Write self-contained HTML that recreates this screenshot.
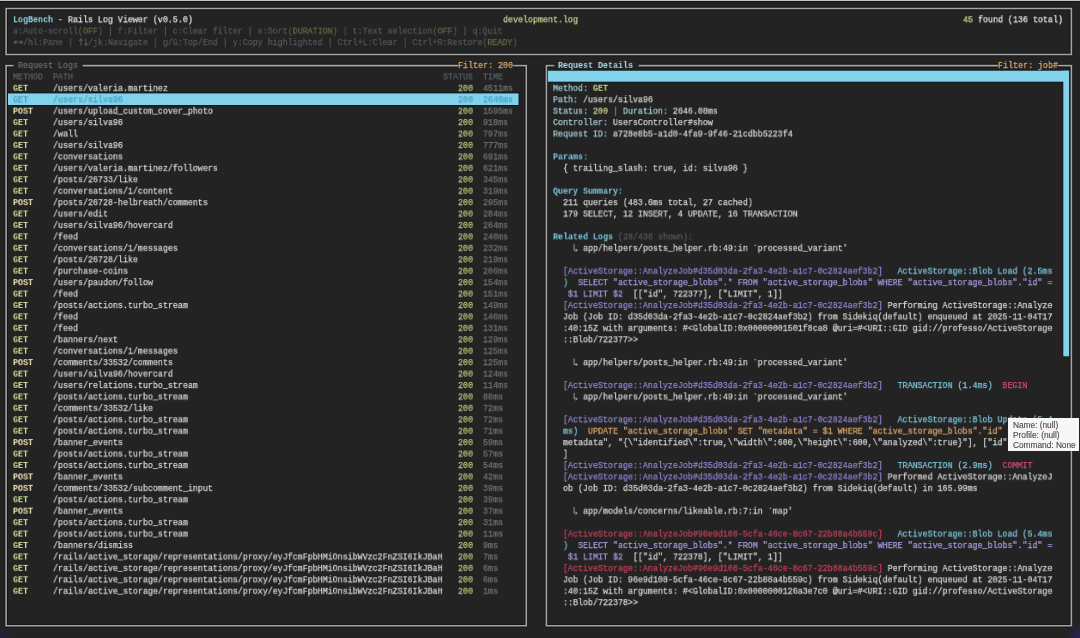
<!DOCTYPE html><html><head><meta charset="utf-8"><style>
html,body{margin:0;padding:0;}
body{width:1080px;height:638px;overflow:hidden;position:relative;background:#232323;font-family:"Liberation Mono",monospace;}
.l{position:absolute;white-space:pre;will-change:transform;-webkit-text-stroke:0.25px;font-size:9.7px;line-height:11.43px;height:11.43px;transform-origin:0 0;}
.b{font-weight:bold;-webkit-text-stroke:0}
.bx{position:absolute;box-sizing:border-box;border:1.5px solid #bdbdbd;}
.hz{position:absolute;height:1.5px;background:#bdbdbd}
.tip{position:absolute;left:1008px;top:418px;width:71px;height:33px;background:#f7f7f7;box-sizing:border-box;font-family:"Liberation Sans",sans-serif;font-size:8.3px;line-height:9.8px;color:#4e4e4e;padding:3px 0 0 5px;-webkit-text-stroke:0.15px;will-change:transform;white-space:pre}
</style></head><body>
<svg style="position:absolute;left:0;top:0" width="1080" height="638"><rect x="0" y="0" width="1080" height="1" fill="#c4c4c4"/><rect x="0" y="1" width="1080" height="1" fill="#131313"/><line x1="5.4" y1="8.5" x2="1072.1" y2="8.5" stroke="#161616" stroke-width="3.6"/><line x1="5.4" y1="54.45" x2="1072.1" y2="54.45" stroke="#161616" stroke-width="3.6"/><line x1="6.1" y1="8.5" x2="6.1" y2="54.45" stroke="#161616" stroke-width="3.6"/><line x1="1071.4" y1="8.5" x2="1071.4" y2="54.45" stroke="#161616" stroke-width="3.6"/><line x1="5.4" y1="65.6" x2="13.6" y2="65.6" stroke="#161616" stroke-width="3.6"/><line x1="82.6" y1="65.6" x2="458.2" y2="65.6" stroke="#161616" stroke-width="3.6"/><line x1="513.2" y1="65.6" x2="527" y2="65.6" stroke="#161616" stroke-width="3.6"/><line x1="5.4" y1="625.7" x2="527" y2="625.7" stroke="#161616" stroke-width="3.6"/><line x1="6.1" y1="65.6" x2="6.1" y2="625.7" stroke="#161616" stroke-width="3.6"/><line x1="526.3" y1="65.6" x2="526.3" y2="625.7" stroke="#161616" stroke-width="3.6"/><line x1="545.7" y1="65.6" x2="554.2" y2="65.6" stroke="#161616" stroke-width="3.6"/><line x1="638.6" y1="65.6" x2="998.2" y2="65.6" stroke="#161616" stroke-width="3.6"/><line x1="1058.2" y1="65.6" x2="1072.1" y2="65.6" stroke="#161616" stroke-width="3.6"/><line x1="545.7" y1="625.7" x2="1072.1" y2="625.7" stroke="#161616" stroke-width="3.6"/><line x1="546.4" y1="65.6" x2="546.4" y2="625.7" stroke="#161616" stroke-width="3.6"/><line x1="1071.4" y1="65.6" x2="1071.4" y2="625.7" stroke="#161616" stroke-width="3.6"/><rect x="7" y="92.4" width="512.5" height="13.6" fill="#14181a"/><rect x="546.9" y="69.7" width="523.1" height="13" fill="#14181a"/><rect x="1062.3" y="69.7" width="7.8" height="287.6" fill="#14181a"/><line x1="5.4" y1="8.5" x2="1072.1" y2="8.5" stroke="#a4a4a4" stroke-width="1.6"/><line x1="5.4" y1="54.45" x2="1072.1" y2="54.45" stroke="#a4a4a4" stroke-width="1.6"/><line x1="6.1" y1="8.5" x2="6.1" y2="54.45" stroke="#a4a4a4" stroke-width="1.6"/><line x1="1071.4" y1="8.5" x2="1071.4" y2="54.45" stroke="#a4a4a4" stroke-width="1.6"/><line x1="5.4" y1="65.6" x2="13.6" y2="65.6" stroke="#a4a4a4" stroke-width="1.6"/><line x1="82.6" y1="65.6" x2="458.2" y2="65.6" stroke="#a4a4a4" stroke-width="1.6"/><line x1="513.2" y1="65.6" x2="527" y2="65.6" stroke="#a4a4a4" stroke-width="1.6"/><line x1="5.4" y1="625.7" x2="527" y2="625.7" stroke="#a4a4a4" stroke-width="1.6"/><line x1="6.1" y1="65.6" x2="6.1" y2="625.7" stroke="#a4a4a4" stroke-width="1.6"/><line x1="526.3" y1="65.6" x2="526.3" y2="625.7" stroke="#a4a4a4" stroke-width="1.6"/><line x1="545.7" y1="65.6" x2="554.2" y2="65.6" stroke="#a4a4a4" stroke-width="1.6"/><line x1="638.6" y1="65.6" x2="998.2" y2="65.6" stroke="#a4a4a4" stroke-width="1.6"/><line x1="1058.2" y1="65.6" x2="1072.1" y2="65.6" stroke="#a4a4a4" stroke-width="1.6"/><line x1="545.7" y1="625.7" x2="1072.1" y2="625.7" stroke="#a4a4a4" stroke-width="1.6"/><line x1="546.4" y1="65.6" x2="546.4" y2="625.7" stroke="#a4a4a4" stroke-width="1.6"/><line x1="1071.4" y1="65.6" x2="1071.4" y2="625.7" stroke="#a4a4a4" stroke-width="1.6"/><rect x="8" y="93.4" width="510.5" height="11.6" fill="#80d3ea"/><rect x="547.9" y="70.7" width="521.1" height="11" fill="#80d3ea"/><rect x="1063.3" y="70.7" width="5.8" height="285.6" fill="#80d3ea"/><g stroke="#575757" stroke-width="1.1" fill="none" stroke-linecap="round"><path d="M14.2 42.15 H22.6 M16 40.55 L14.2 42.15 L16 43.75 M20.8 40.55 L22.6 42.15 L20.8 43.75"/><path d="M80.9 38.75 V45.55 M79.3 40.55 L80.9 38.75 L82.5 40.55"/><path d="M85.9 38.75 V45.55 M84.3 43.75 L85.9 45.55 L87.5 43.75"/></g><path d="M574.1 244.29 V250.29 H577.2 M575.8 248.79 L577.3 250.29 L575.8 251.79" stroke="#9a9a9a" stroke-width="1" fill="none" stroke-linejoin="round"/><path d="M574.1 358.59 V364.59 H577.2 M575.8 363.09 L577.3 364.59 L575.8 366.09" stroke="#9a9a9a" stroke-width="1" fill="none" stroke-linejoin="round"/><path d="M574.1 392.88 V398.88 H577.2 M575.8 397.38 L577.3 398.88 L575.8 400.38" stroke="#9a9a9a" stroke-width="1" fill="none" stroke-linejoin="round"/><path d="M574.1 507.18 V513.18 H577.2 M575.8 511.68 L577.3 513.18 L575.8 514.68" stroke="#9a9a9a" stroke-width="1" fill="none" stroke-linejoin="round"/></svg>
<div class="l" style="left:13.4px;top:14px;transform:translateY(0.19px) scaleX(0.8590)"><span style="color:#92d4e6" class="b">LogBench</span><span style="color:#e4e4e4"> - Rails Log Viewer (v0.5.0)</span></div>
<div class="l" style="left:503.4px;top:14px;transform:translateY(0.19px) scaleX(0.8590)"><span style="color:#c4d890">development.log</span></div>
<div class="l" style="left:963.4px;top:14px;transform:translateY(0.19px) scaleX(0.8590)"><span style="color:#c4d890">45</span><span style="color:#e4e4e4"> found (136 total)</span></div>
<div class="l" style="left:13.4px;top:25px;transform:translateY(0.62px) scaleX(0.8590)"><span style="color:#575757">a:Auto-scroll(</span><span style="color:#646e44">OFF</span><span style="color:#575757">) | f:Filter | c:Clear filter | s:Sort(</span><span style="color:#646e44">DURATION</span><span style="color:#575757">) | t:Text selection(</span><span style="color:#646e44">OFF</span><span style="color:#575757">) | q:Quit</span></div>
<div class="l" style="left:13.4px;top:37px;transform:translateY(0.05px) scaleX(0.8590)"><span style="color:#575757">  /hl:Pane |   /jk:Navigate | g/G:Top/End | y:Copy highlighted | Ctrl+L:Clear | Ctrl+R:Restore(</span><span style="color:#646e44">READY</span><span style="color:#575757">)</span></div>
<div class="l" style="left:18.4px;top:59px;transform:translateY(0.91px) scaleX(0.8590)"><span style="color:#6c6c6c">Request Logs</span></div>
<div class="l" style="left:458.4px;top:59px;transform:translateY(0.91px) scaleX(0.8590)"><span style="color:#dfa96c">Filter: 200</span></div>
<div class="l" style="left:13.4px;top:71px;transform:translateY(0.34px) scaleX(0.8590)"><span style="color:#56626a">METHOD  PATH</span></div>
<div class="l" style="left:443.4px;top:71px;transform:translateY(0.34px) scaleX(0.8590)"><span style="color:#56626a">STATUS  TIME</span></div>
<div class="l" style="left:13.4px;top:82px;transform:translateY(0.77px) scaleX(0.8590)"><span style="color:#c4d890" class="b">GET</span></div>
<div class="l" style="left:53.4px;top:82px;transform:translateY(0.77px) scaleX(0.8590)"><span style="color:#d6d6d6">/users/valeria.martinez</span></div>
<div class="l" style="left:458.4px;top:82px;transform:translateY(0.77px) scaleX(0.8590)"><span style="color:#b9c97c">200</span></div>
<div class="l" style="left:483.4px;top:82px;transform:translateY(0.77px) scaleX(0.8590)"><span style="color:#747474">4511ms</span></div>
<div class="l" style="left:13.4px;top:94px;transform:translateY(0.20px) scaleX(0.8590)"><span style="color:#4c9cc4">GET</span></div>
<div class="l" style="left:53.4px;top:94px;transform:translateY(0.20px) scaleX(0.8590)"><span style="color:#4c9cc4">/users/silva96</span></div>
<div class="l" style="left:458.4px;top:94px;transform:translateY(0.20px) scaleX(0.8590)"><span style="color:#4c9cc4">200</span></div>
<div class="l" style="left:483.4px;top:94px;transform:translateY(0.20px) scaleX(0.8590)"><span style="color:#4c9cc4">2646ms</span></div>
<div class="l" style="left:13.4px;top:105px;transform:translateY(0.63px) scaleX(0.8590)"><span style="color:#eee4b4" class="b">POST</span></div>
<div class="l" style="left:53.4px;top:105px;transform:translateY(0.63px) scaleX(0.8590)"><span style="color:#d6d6d6">/users/upload_custom_cover_photo</span></div>
<div class="l" style="left:458.4px;top:105px;transform:translateY(0.63px) scaleX(0.8590)"><span style="color:#b9c97c">200</span></div>
<div class="l" style="left:483.4px;top:105px;transform:translateY(0.63px) scaleX(0.8590)"><span style="color:#747474">1595ms</span></div>
<div class="l" style="left:13.4px;top:117px;transform:translateY(0.06px) scaleX(0.8590)"><span style="color:#c4d890" class="b">GET</span></div>
<div class="l" style="left:53.4px;top:117px;transform:translateY(0.06px) scaleX(0.8590)"><span style="color:#d6d6d6">/users/silva96</span></div>
<div class="l" style="left:458.4px;top:117px;transform:translateY(0.06px) scaleX(0.8590)"><span style="color:#b9c97c">200</span></div>
<div class="l" style="left:483.4px;top:117px;transform:translateY(0.06px) scaleX(0.8590)"><span style="color:#747474">918ms</span></div>
<div class="l" style="left:13.4px;top:128px;transform:translateY(0.49px) scaleX(0.8590)"><span style="color:#c4d890" class="b">GET</span></div>
<div class="l" style="left:53.4px;top:128px;transform:translateY(0.49px) scaleX(0.8590)"><span style="color:#d6d6d6">/wall</span></div>
<div class="l" style="left:458.4px;top:128px;transform:translateY(0.49px) scaleX(0.8590)"><span style="color:#b9c97c">200</span></div>
<div class="l" style="left:483.4px;top:128px;transform:translateY(0.49px) scaleX(0.8590)"><span style="color:#747474">797ms</span></div>
<div class="l" style="left:13.4px;top:139px;transform:translateY(0.92px) scaleX(0.8590)"><span style="color:#c4d890" class="b">GET</span></div>
<div class="l" style="left:53.4px;top:139px;transform:translateY(0.92px) scaleX(0.8590)"><span style="color:#d6d6d6">/users/silva96</span></div>
<div class="l" style="left:458.4px;top:139px;transform:translateY(0.92px) scaleX(0.8590)"><span style="color:#b9c97c">200</span></div>
<div class="l" style="left:483.4px;top:139px;transform:translateY(0.92px) scaleX(0.8590)"><span style="color:#747474">777ms</span></div>
<div class="l" style="left:13.4px;top:151px;transform:translateY(0.35px) scaleX(0.8590)"><span style="color:#c4d890" class="b">GET</span></div>
<div class="l" style="left:53.4px;top:151px;transform:translateY(0.35px) scaleX(0.8590)"><span style="color:#d6d6d6">/conversations</span></div>
<div class="l" style="left:458.4px;top:151px;transform:translateY(0.35px) scaleX(0.8590)"><span style="color:#b9c97c">200</span></div>
<div class="l" style="left:483.4px;top:151px;transform:translateY(0.35px) scaleX(0.8590)"><span style="color:#747474">691ms</span></div>
<div class="l" style="left:13.4px;top:162px;transform:translateY(0.78px) scaleX(0.8590)"><span style="color:#c4d890" class="b">GET</span></div>
<div class="l" style="left:53.4px;top:162px;transform:translateY(0.78px) scaleX(0.8590)"><span style="color:#d6d6d6">/users/valeria.martinez/followers</span></div>
<div class="l" style="left:458.4px;top:162px;transform:translateY(0.78px) scaleX(0.8590)"><span style="color:#b9c97c">200</span></div>
<div class="l" style="left:483.4px;top:162px;transform:translateY(0.78px) scaleX(0.8590)"><span style="color:#747474">621ms</span></div>
<div class="l" style="left:13.4px;top:174px;transform:translateY(0.21px) scaleX(0.8590)"><span style="color:#c4d890" class="b">GET</span></div>
<div class="l" style="left:53.4px;top:174px;transform:translateY(0.21px) scaleX(0.8590)"><span style="color:#d6d6d6">/posts/26733/like</span></div>
<div class="l" style="left:458.4px;top:174px;transform:translateY(0.21px) scaleX(0.8590)"><span style="color:#b9c97c">200</span></div>
<div class="l" style="left:483.4px;top:174px;transform:translateY(0.21px) scaleX(0.8590)"><span style="color:#747474">345ms</span></div>
<div class="l" style="left:13.4px;top:185px;transform:translateY(0.64px) scaleX(0.8590)"><span style="color:#c4d890" class="b">GET</span></div>
<div class="l" style="left:53.4px;top:185px;transform:translateY(0.64px) scaleX(0.8590)"><span style="color:#d6d6d6">/conversations/1/content</span></div>
<div class="l" style="left:458.4px;top:185px;transform:translateY(0.64px) scaleX(0.8590)"><span style="color:#b9c97c">200</span></div>
<div class="l" style="left:483.4px;top:185px;transform:translateY(0.64px) scaleX(0.8590)"><span style="color:#747474">319ms</span></div>
<div class="l" style="left:13.4px;top:197px;transform:translateY(0.07px) scaleX(0.8590)"><span style="color:#eee4b4" class="b">POST</span></div>
<div class="l" style="left:53.4px;top:197px;transform:translateY(0.07px) scaleX(0.8590)"><span style="color:#d6d6d6">/posts/26728-helbreath/comments</span></div>
<div class="l" style="left:458.4px;top:197px;transform:translateY(0.07px) scaleX(0.8590)"><span style="color:#b9c97c">200</span></div>
<div class="l" style="left:483.4px;top:197px;transform:translateY(0.07px) scaleX(0.8590)"><span style="color:#747474">295ms</span></div>
<div class="l" style="left:13.4px;top:208px;transform:translateY(0.50px) scaleX(0.8590)"><span style="color:#c4d890" class="b">GET</span></div>
<div class="l" style="left:53.4px;top:208px;transform:translateY(0.50px) scaleX(0.8590)"><span style="color:#d6d6d6">/users/edit</span></div>
<div class="l" style="left:458.4px;top:208px;transform:translateY(0.50px) scaleX(0.8590)"><span style="color:#b9c97c">200</span></div>
<div class="l" style="left:483.4px;top:208px;transform:translateY(0.50px) scaleX(0.8590)"><span style="color:#747474">284ms</span></div>
<div class="l" style="left:13.4px;top:219px;transform:translateY(0.93px) scaleX(0.8590)"><span style="color:#c4d890" class="b">GET</span></div>
<div class="l" style="left:53.4px;top:219px;transform:translateY(0.93px) scaleX(0.8590)"><span style="color:#d6d6d6">/users/silva96/hovercard</span></div>
<div class="l" style="left:458.4px;top:219px;transform:translateY(0.93px) scaleX(0.8590)"><span style="color:#b9c97c">200</span></div>
<div class="l" style="left:483.4px;top:219px;transform:translateY(0.93px) scaleX(0.8590)"><span style="color:#747474">264ms</span></div>
<div class="l" style="left:13.4px;top:231px;transform:translateY(0.36px) scaleX(0.8590)"><span style="color:#c4d890" class="b">GET</span></div>
<div class="l" style="left:53.4px;top:231px;transform:translateY(0.36px) scaleX(0.8590)"><span style="color:#d6d6d6">/feed</span></div>
<div class="l" style="left:458.4px;top:231px;transform:translateY(0.36px) scaleX(0.8590)"><span style="color:#b9c97c">200</span></div>
<div class="l" style="left:483.4px;top:231px;transform:translateY(0.36px) scaleX(0.8590)"><span style="color:#747474">240ms</span></div>
<div class="l" style="left:13.4px;top:242px;transform:translateY(0.79px) scaleX(0.8590)"><span style="color:#c4d890" class="b">GET</span></div>
<div class="l" style="left:53.4px;top:242px;transform:translateY(0.79px) scaleX(0.8590)"><span style="color:#d6d6d6">/conversations/1/messages</span></div>
<div class="l" style="left:458.4px;top:242px;transform:translateY(0.79px) scaleX(0.8590)"><span style="color:#b9c97c">200</span></div>
<div class="l" style="left:483.4px;top:242px;transform:translateY(0.79px) scaleX(0.8590)"><span style="color:#747474">232ms</span></div>
<div class="l" style="left:13.4px;top:254px;transform:translateY(0.22px) scaleX(0.8590)"><span style="color:#c4d890" class="b">GET</span></div>
<div class="l" style="left:53.4px;top:254px;transform:translateY(0.22px) scaleX(0.8590)"><span style="color:#d6d6d6">/posts/26728/like</span></div>
<div class="l" style="left:458.4px;top:254px;transform:translateY(0.22px) scaleX(0.8590)"><span style="color:#b9c97c">200</span></div>
<div class="l" style="left:483.4px;top:254px;transform:translateY(0.22px) scaleX(0.8590)"><span style="color:#747474">219ms</span></div>
<div class="l" style="left:13.4px;top:265px;transform:translateY(0.65px) scaleX(0.8590)"><span style="color:#c4d890" class="b">GET</span></div>
<div class="l" style="left:53.4px;top:265px;transform:translateY(0.65px) scaleX(0.8590)"><span style="color:#d6d6d6">/purchase-coins</span></div>
<div class="l" style="left:458.4px;top:265px;transform:translateY(0.65px) scaleX(0.8590)"><span style="color:#b9c97c">200</span></div>
<div class="l" style="left:483.4px;top:265px;transform:translateY(0.65px) scaleX(0.8590)"><span style="color:#747474">206ms</span></div>
<div class="l" style="left:13.4px;top:277px;transform:translateY(0.08px) scaleX(0.8590)"><span style="color:#eee4b4" class="b">POST</span></div>
<div class="l" style="left:53.4px;top:277px;transform:translateY(0.08px) scaleX(0.8590)"><span style="color:#d6d6d6">/users/paudon/follow</span></div>
<div class="l" style="left:458.4px;top:277px;transform:translateY(0.08px) scaleX(0.8590)"><span style="color:#b9c97c">200</span></div>
<div class="l" style="left:483.4px;top:277px;transform:translateY(0.08px) scaleX(0.8590)"><span style="color:#747474">154ms</span></div>
<div class="l" style="left:13.4px;top:288px;transform:translateY(0.51px) scaleX(0.8590)"><span style="color:#c4d890" class="b">GET</span></div>
<div class="l" style="left:53.4px;top:288px;transform:translateY(0.51px) scaleX(0.8590)"><span style="color:#d6d6d6">/feed</span></div>
<div class="l" style="left:458.4px;top:288px;transform:translateY(0.51px) scaleX(0.8590)"><span style="color:#b9c97c">200</span></div>
<div class="l" style="left:483.4px;top:288px;transform:translateY(0.51px) scaleX(0.8590)"><span style="color:#747474">151ms</span></div>
<div class="l" style="left:13.4px;top:299px;transform:translateY(0.94px) scaleX(0.8590)"><span style="color:#c4d890" class="b">GET</span></div>
<div class="l" style="left:53.4px;top:299px;transform:translateY(0.94px) scaleX(0.8590)"><span style="color:#d6d6d6">/posts/actions.turbo_stream</span></div>
<div class="l" style="left:458.4px;top:299px;transform:translateY(0.94px) scaleX(0.8590)"><span style="color:#b9c97c">200</span></div>
<div class="l" style="left:483.4px;top:299px;transform:translateY(0.94px) scaleX(0.8590)"><span style="color:#747474">149ms</span></div>
<div class="l" style="left:13.4px;top:311px;transform:translateY(0.37px) scaleX(0.8590)"><span style="color:#c4d890" class="b">GET</span></div>
<div class="l" style="left:53.4px;top:311px;transform:translateY(0.37px) scaleX(0.8590)"><span style="color:#d6d6d6">/feed</span></div>
<div class="l" style="left:458.4px;top:311px;transform:translateY(0.37px) scaleX(0.8590)"><span style="color:#b9c97c">200</span></div>
<div class="l" style="left:483.4px;top:311px;transform:translateY(0.37px) scaleX(0.8590)"><span style="color:#747474">146ms</span></div>
<div class="l" style="left:13.4px;top:322px;transform:translateY(0.80px) scaleX(0.8590)"><span style="color:#c4d890" class="b">GET</span></div>
<div class="l" style="left:53.4px;top:322px;transform:translateY(0.80px) scaleX(0.8590)"><span style="color:#d6d6d6">/feed</span></div>
<div class="l" style="left:458.4px;top:322px;transform:translateY(0.80px) scaleX(0.8590)"><span style="color:#b9c97c">200</span></div>
<div class="l" style="left:483.4px;top:322px;transform:translateY(0.80px) scaleX(0.8590)"><span style="color:#747474">131ms</span></div>
<div class="l" style="left:13.4px;top:334px;transform:translateY(0.23px) scaleX(0.8590)"><span style="color:#c4d890" class="b">GET</span></div>
<div class="l" style="left:53.4px;top:334px;transform:translateY(0.23px) scaleX(0.8590)"><span style="color:#d6d6d6">/banners/next</span></div>
<div class="l" style="left:458.4px;top:334px;transform:translateY(0.23px) scaleX(0.8590)"><span style="color:#b9c97c">200</span></div>
<div class="l" style="left:483.4px;top:334px;transform:translateY(0.23px) scaleX(0.8590)"><span style="color:#747474">129ms</span></div>
<div class="l" style="left:13.4px;top:345px;transform:translateY(0.66px) scaleX(0.8590)"><span style="color:#c4d890" class="b">GET</span></div>
<div class="l" style="left:53.4px;top:345px;transform:translateY(0.66px) scaleX(0.8590)"><span style="color:#d6d6d6">/conversations/1/messages</span></div>
<div class="l" style="left:458.4px;top:345px;transform:translateY(0.66px) scaleX(0.8590)"><span style="color:#b9c97c">200</span></div>
<div class="l" style="left:483.4px;top:345px;transform:translateY(0.66px) scaleX(0.8590)"><span style="color:#747474">125ms</span></div>
<div class="l" style="left:13.4px;top:357px;transform:translateY(0.09px) scaleX(0.8590)"><span style="color:#eee4b4" class="b">POST</span></div>
<div class="l" style="left:53.4px;top:357px;transform:translateY(0.09px) scaleX(0.8590)"><span style="color:#d6d6d6">/comments/33532/comments</span></div>
<div class="l" style="left:458.4px;top:357px;transform:translateY(0.09px) scaleX(0.8590)"><span style="color:#b9c97c">200</span></div>
<div class="l" style="left:483.4px;top:357px;transform:translateY(0.09px) scaleX(0.8590)"><span style="color:#747474">125ms</span></div>
<div class="l" style="left:13.4px;top:368px;transform:translateY(0.52px) scaleX(0.8590)"><span style="color:#c4d890" class="b">GET</span></div>
<div class="l" style="left:53.4px;top:368px;transform:translateY(0.52px) scaleX(0.8590)"><span style="color:#d6d6d6">/users/silva96/hovercard</span></div>
<div class="l" style="left:458.4px;top:368px;transform:translateY(0.52px) scaleX(0.8590)"><span style="color:#b9c97c">200</span></div>
<div class="l" style="left:483.4px;top:368px;transform:translateY(0.52px) scaleX(0.8590)"><span style="color:#747474">124ms</span></div>
<div class="l" style="left:13.4px;top:379px;transform:translateY(0.95px) scaleX(0.8590)"><span style="color:#c4d890" class="b">GET</span></div>
<div class="l" style="left:53.4px;top:379px;transform:translateY(0.95px) scaleX(0.8590)"><span style="color:#d6d6d6">/users/relations.turbo_stream</span></div>
<div class="l" style="left:458.4px;top:379px;transform:translateY(0.95px) scaleX(0.8590)"><span style="color:#b9c97c">200</span></div>
<div class="l" style="left:483.4px;top:379px;transform:translateY(0.95px) scaleX(0.8590)"><span style="color:#747474">114ms</span></div>
<div class="l" style="left:13.4px;top:391px;transform:translateY(0.38px) scaleX(0.8590)"><span style="color:#c4d890" class="b">GET</span></div>
<div class="l" style="left:53.4px;top:391px;transform:translateY(0.38px) scaleX(0.8590)"><span style="color:#d6d6d6">/posts/actions.turbo_stream</span></div>
<div class="l" style="left:458.4px;top:391px;transform:translateY(0.38px) scaleX(0.8590)"><span style="color:#b9c97c">200</span></div>
<div class="l" style="left:483.4px;top:391px;transform:translateY(0.38px) scaleX(0.8590)"><span style="color:#747474">88ms</span></div>
<div class="l" style="left:13.4px;top:402px;transform:translateY(0.81px) scaleX(0.8590)"><span style="color:#c4d890" class="b">GET</span></div>
<div class="l" style="left:53.4px;top:402px;transform:translateY(0.81px) scaleX(0.8590)"><span style="color:#d6d6d6">/comments/33532/like</span></div>
<div class="l" style="left:458.4px;top:402px;transform:translateY(0.81px) scaleX(0.8590)"><span style="color:#b9c97c">200</span></div>
<div class="l" style="left:483.4px;top:402px;transform:translateY(0.81px) scaleX(0.8590)"><span style="color:#747474">72ms</span></div>
<div class="l" style="left:13.4px;top:414px;transform:translateY(0.24px) scaleX(0.8590)"><span style="color:#c4d890" class="b">GET</span></div>
<div class="l" style="left:53.4px;top:414px;transform:translateY(0.24px) scaleX(0.8590)"><span style="color:#d6d6d6">/posts/actions.turbo_stream</span></div>
<div class="l" style="left:458.4px;top:414px;transform:translateY(0.24px) scaleX(0.8590)"><span style="color:#b9c97c">200</span></div>
<div class="l" style="left:483.4px;top:414px;transform:translateY(0.24px) scaleX(0.8590)"><span style="color:#747474">72ms</span></div>
<div class="l" style="left:13.4px;top:425px;transform:translateY(0.67px) scaleX(0.8590)"><span style="color:#c4d890" class="b">GET</span></div>
<div class="l" style="left:53.4px;top:425px;transform:translateY(0.67px) scaleX(0.8590)"><span style="color:#d6d6d6">/posts/actions.turbo_stream</span></div>
<div class="l" style="left:458.4px;top:425px;transform:translateY(0.67px) scaleX(0.8590)"><span style="color:#b9c97c">200</span></div>
<div class="l" style="left:483.4px;top:425px;transform:translateY(0.67px) scaleX(0.8590)"><span style="color:#747474">71ms</span></div>
<div class="l" style="left:13.4px;top:437px;transform:translateY(0.10px) scaleX(0.8590)"><span style="color:#eee4b4" class="b">POST</span></div>
<div class="l" style="left:53.4px;top:437px;transform:translateY(0.10px) scaleX(0.8590)"><span style="color:#d6d6d6">/banner_events</span></div>
<div class="l" style="left:458.4px;top:437px;transform:translateY(0.10px) scaleX(0.8590)"><span style="color:#b9c97c">200</span></div>
<div class="l" style="left:483.4px;top:437px;transform:translateY(0.10px) scaleX(0.8590)"><span style="color:#747474">59ms</span></div>
<div class="l" style="left:13.4px;top:448px;transform:translateY(0.53px) scaleX(0.8590)"><span style="color:#c4d890" class="b">GET</span></div>
<div class="l" style="left:53.4px;top:448px;transform:translateY(0.53px) scaleX(0.8590)"><span style="color:#d6d6d6">/posts/actions.turbo_stream</span></div>
<div class="l" style="left:458.4px;top:448px;transform:translateY(0.53px) scaleX(0.8590)"><span style="color:#b9c97c">200</span></div>
<div class="l" style="left:483.4px;top:448px;transform:translateY(0.53px) scaleX(0.8590)"><span style="color:#747474">57ms</span></div>
<div class="l" style="left:13.4px;top:459px;transform:translateY(0.96px) scaleX(0.8590)"><span style="color:#c4d890" class="b">GET</span></div>
<div class="l" style="left:53.4px;top:459px;transform:translateY(0.96px) scaleX(0.8590)"><span style="color:#d6d6d6">/posts/actions.turbo_stream</span></div>
<div class="l" style="left:458.4px;top:459px;transform:translateY(0.96px) scaleX(0.8590)"><span style="color:#b9c97c">200</span></div>
<div class="l" style="left:483.4px;top:459px;transform:translateY(0.96px) scaleX(0.8590)"><span style="color:#747474">54ms</span></div>
<div class="l" style="left:13.4px;top:471px;transform:translateY(0.39px) scaleX(0.8590)"><span style="color:#eee4b4" class="b">POST</span></div>
<div class="l" style="left:53.4px;top:471px;transform:translateY(0.39px) scaleX(0.8590)"><span style="color:#d6d6d6">/banner_events</span></div>
<div class="l" style="left:458.4px;top:471px;transform:translateY(0.39px) scaleX(0.8590)"><span style="color:#b9c97c">200</span></div>
<div class="l" style="left:483.4px;top:471px;transform:translateY(0.39px) scaleX(0.8590)"><span style="color:#747474">42ms</span></div>
<div class="l" style="left:13.4px;top:482px;transform:translateY(0.82px) scaleX(0.8590)"><span style="color:#eee4b4" class="b">POST</span></div>
<div class="l" style="left:53.4px;top:482px;transform:translateY(0.82px) scaleX(0.8590)"><span style="color:#d6d6d6">/comments/33532/subcomment_input</span></div>
<div class="l" style="left:458.4px;top:482px;transform:translateY(0.82px) scaleX(0.8590)"><span style="color:#b9c97c">200</span></div>
<div class="l" style="left:483.4px;top:482px;transform:translateY(0.82px) scaleX(0.8590)"><span style="color:#747474">39ms</span></div>
<div class="l" style="left:13.4px;top:494px;transform:translateY(0.25px) scaleX(0.8590)"><span style="color:#c4d890" class="b">GET</span></div>
<div class="l" style="left:53.4px;top:494px;transform:translateY(0.25px) scaleX(0.8590)"><span style="color:#d6d6d6">/posts/actions.turbo_stream</span></div>
<div class="l" style="left:458.4px;top:494px;transform:translateY(0.25px) scaleX(0.8590)"><span style="color:#b9c97c">200</span></div>
<div class="l" style="left:483.4px;top:494px;transform:translateY(0.25px) scaleX(0.8590)"><span style="color:#747474">39ms</span></div>
<div class="l" style="left:13.4px;top:505px;transform:translateY(0.68px) scaleX(0.8590)"><span style="color:#eee4b4" class="b">POST</span></div>
<div class="l" style="left:53.4px;top:505px;transform:translateY(0.68px) scaleX(0.8590)"><span style="color:#d6d6d6">/banner_events</span></div>
<div class="l" style="left:458.4px;top:505px;transform:translateY(0.68px) scaleX(0.8590)"><span style="color:#b9c97c">200</span></div>
<div class="l" style="left:483.4px;top:505px;transform:translateY(0.68px) scaleX(0.8590)"><span style="color:#747474">37ms</span></div>
<div class="l" style="left:13.4px;top:517px;transform:translateY(0.11px) scaleX(0.8590)"><span style="color:#c4d890" class="b">GET</span></div>
<div class="l" style="left:53.4px;top:517px;transform:translateY(0.11px) scaleX(0.8590)"><span style="color:#d6d6d6">/posts/actions.turbo_stream</span></div>
<div class="l" style="left:458.4px;top:517px;transform:translateY(0.11px) scaleX(0.8590)"><span style="color:#b9c97c">200</span></div>
<div class="l" style="left:483.4px;top:517px;transform:translateY(0.11px) scaleX(0.8590)"><span style="color:#747474">31ms</span></div>
<div class="l" style="left:13.4px;top:528px;transform:translateY(0.54px) scaleX(0.8590)"><span style="color:#c4d890" class="b">GET</span></div>
<div class="l" style="left:53.4px;top:528px;transform:translateY(0.54px) scaleX(0.8590)"><span style="color:#d6d6d6">/posts/actions.turbo_stream</span></div>
<div class="l" style="left:458.4px;top:528px;transform:translateY(0.54px) scaleX(0.8590)"><span style="color:#b9c97c">200</span></div>
<div class="l" style="left:483.4px;top:528px;transform:translateY(0.54px) scaleX(0.8590)"><span style="color:#747474">11ms</span></div>
<div class="l" style="left:13.4px;top:539px;transform:translateY(0.97px) scaleX(0.8590)"><span style="color:#c4d890" class="b">GET</span></div>
<div class="l" style="left:53.4px;top:539px;transform:translateY(0.97px) scaleX(0.8590)"><span style="color:#d6d6d6">/banners/dismiss</span></div>
<div class="l" style="left:458.4px;top:539px;transform:translateY(0.97px) scaleX(0.8590)"><span style="color:#b9c97c">200</span></div>
<div class="l" style="left:483.4px;top:539px;transform:translateY(0.97px) scaleX(0.8590)"><span style="color:#747474">9ms</span></div>
<div class="l" style="left:13.4px;top:551px;transform:translateY(0.40px) scaleX(0.8590)"><span style="color:#c4d890" class="b">GET</span></div>
<div class="l" style="left:53.4px;top:551px;transform:translateY(0.40px) scaleX(0.8590)"><span style="color:#d6d6d6">/rails/active_storage/representations/proxy/eyJfcmFpbHMiOnsibWVzc2FnZSI6IkJBaH</span></div>
<div class="l" style="left:458.4px;top:551px;transform:translateY(0.40px) scaleX(0.8590)"><span style="color:#b9c97c">200</span></div>
<div class="l" style="left:483.4px;top:551px;transform:translateY(0.40px) scaleX(0.8590)"><span style="color:#747474">7ms</span></div>
<div class="l" style="left:13.4px;top:562px;transform:translateY(0.83px) scaleX(0.8590)"><span style="color:#c4d890" class="b">GET</span></div>
<div class="l" style="left:53.4px;top:562px;transform:translateY(0.83px) scaleX(0.8590)"><span style="color:#d6d6d6">/rails/active_storage/representations/proxy/eyJfcmFpbHMiOnsibWVzc2FnZSI6IkJBaH</span></div>
<div class="l" style="left:458.4px;top:562px;transform:translateY(0.83px) scaleX(0.8590)"><span style="color:#b9c97c">200</span></div>
<div class="l" style="left:483.4px;top:562px;transform:translateY(0.83px) scaleX(0.8590)"><span style="color:#747474">6ms</span></div>
<div class="l" style="left:13.4px;top:574px;transform:translateY(0.26px) scaleX(0.8590)"><span style="color:#c4d890" class="b">GET</span></div>
<div class="l" style="left:53.4px;top:574px;transform:translateY(0.26px) scaleX(0.8590)"><span style="color:#d6d6d6">/rails/active_storage/representations/proxy/eyJfcmFpbHMiOnsibWVzc2FnZSI6IkJBaH</span></div>
<div class="l" style="left:458.4px;top:574px;transform:translateY(0.26px) scaleX(0.8590)"><span style="color:#b9c97c">200</span></div>
<div class="l" style="left:483.4px;top:574px;transform:translateY(0.26px) scaleX(0.8590)"><span style="color:#747474">6ms</span></div>
<div class="l" style="left:13.4px;top:585px;transform:translateY(0.69px) scaleX(0.8590)"><span style="color:#c4d890" class="b">GET</span></div>
<div class="l" style="left:53.4px;top:585px;transform:translateY(0.69px) scaleX(0.8590)"><span style="color:#d6d6d6">/rails/active_storage/representations/proxy/eyJfcmFpbHMiOnsibWVzc2FnZSI6IkJBaH</span></div>
<div class="l" style="left:458.4px;top:585px;transform:translateY(0.69px) scaleX(0.8590)"><span style="color:#b9c97c">200</span></div>
<div class="l" style="left:483.4px;top:585px;transform:translateY(0.69px) scaleX(0.8590)"><span style="color:#747474">1ms</span></div>
<div class="l" style="left:558.4px;top:59px;transform:translateY(0.91px) scaleX(0.8590)"><span style="color:#a4d8e6" class="b">Request Details</span></div>
<div class="l" style="left:998.4px;top:59px;transform:translateY(0.91px) scaleX(0.8590)"><span style="color:#dfa96c">Filter: job#</span></div>
<div class="l" style="left:553.4px;top:82px;transform:translateY(0.77px) scaleX(0.8590)"><span style="color:#a6cdd6">Method: </span><span style="color:#c4d890" class="b">GET</span></div>
<div class="l" style="left:553.4px;top:94px;transform:translateY(0.20px) scaleX(0.8590)"><span style="color:#a6cdd6">Path: </span><span style="color:#d6d6d6">/users/silva96</span></div>
<div class="l" style="left:553.4px;top:105px;transform:translateY(0.63px) scaleX(0.8590)"><span style="color:#a6cdd6">Status: </span><span style="color:#c4d890">200</span><span style="color:#8a8a8a"> | </span><span style="color:#a6cdd6">Duration: </span><span style="color:#d6d6d6">2646.08ms</span></div>
<div class="l" style="left:553.4px;top:117px;transform:translateY(0.06px) scaleX(0.8590)"><span style="color:#a6cdd6">Controller: </span><span style="color:#d6d6d6">UsersController#show</span></div>
<div class="l" style="left:553.4px;top:128px;transform:translateY(0.49px) scaleX(0.8590)"><span style="color:#a6cdd6">Request ID: </span><span style="color:#d6d6d6">a728e8b5-a1d0-4fa9-9f46-21cdbb5223f4</span></div>
<div class="l" style="left:553.4px;top:151px;transform:translateY(0.35px) scaleX(0.8590)"><span style="color:#7cc6da" class="b">Params:</span></div>
<div class="l" style="left:553.4px;top:162px;transform:translateY(0.78px) scaleX(0.8590)"><span style="color:#d6d6d6">  { trailing_slash: true, id: silva96 }</span></div>
<div class="l" style="left:553.4px;top:185px;transform:translateY(0.64px) scaleX(0.8590)"><span style="color:#7cc6da" class="b">Query Summary:</span></div>
<div class="l" style="left:553.4px;top:197px;transform:translateY(0.07px) scaleX(0.8590)"><span style="color:#d6d6d6">  211 queries (483.6ms total, 27 cached)</span></div>
<div class="l" style="left:553.4px;top:208px;transform:translateY(0.50px) scaleX(0.8590)"><span style="color:#d6d6d6">  179 SELECT, 12 INSERT, 4 UPDATE, 16 TRANSACTION</span></div>
<div class="l" style="left:553.4px;top:231px;transform:translateY(0.36px) scaleX(0.8590)"><span style="color:#7cc6da" class="b">Related Logs</span><span style="color:#575757"> (28/438 shown):</span></div>
<div class="l" style="left:573.4px;top:242px;transform:translateY(0.79px) scaleX(0.8590)"><span style="color:#9a9a9a">  </span><span style="color:#d6d6d6">app/helpers/posts_helper.rb:49:in `processed_variant&#x27;</span></div>
<div class="l" style="left:563.4px;top:265px;transform:translateY(0.65px) scaleX(0.8590)"><span style="color:#9282d2">[ActiveStorage::AnalyzeJob#d35d03da-2fa3-4e2b-a1c7-0c2824aef3b2]</span><span style="color:#7cc6da">   ActiveStorage::Blob Load (2.5ms</span></div>
<div class="l" style="left:563.4px;top:277px;transform:translateY(0.08px) scaleX(0.8590)"><span style="color:#7cc6da">)</span><span style="color:#a69ae0">  SELECT &quot;active_storage_blobs&quot;.* FROM &quot;active_storage_blobs&quot; WHERE &quot;active_storage_blobs&quot;.&quot;id&quot; =</span></div>
<div class="l" style="left:563.4px;top:288px;transform:translateY(0.51px) scaleX(0.8590)"><span style="color:#a69ae0"> $1 LIMIT $2</span><span style="color:#d6d6d6">  [[&quot;id&quot;, 722377], [&quot;LIMIT&quot;, 1]]</span></div>
<div class="l" style="left:563.4px;top:299px;transform:translateY(0.94px) scaleX(0.8590)"><span style="color:#9282d2">[ActiveStorage::AnalyzeJob#d35d03da-2fa3-4e2b-a1c7-0c2824aef3b2]</span><span style="color:#d6d6d6"> Performing ActiveStorage::Analyze</span></div>
<div class="l" style="left:563.4px;top:311px;transform:translateY(0.37px) scaleX(0.8590)"><span style="color:#d6d6d6">Job (Job ID: d35d03da-2fa3-4e2b-a1c7-0c2824aef3b2) from Sidekiq(default) enqueued at 2025-11-04T17</span></div>
<div class="l" style="left:563.4px;top:322px;transform:translateY(0.80px) scaleX(0.8590)"><span style="color:#d6d6d6">:40:15Z with arguments: #&lt;GlobalID:0x00000001501f8ca8 @uri=#&lt;URI::GID gid://professo/ActiveStorage</span></div>
<div class="l" style="left:563.4px;top:334px;transform:translateY(0.23px) scaleX(0.8590)"><span style="color:#d6d6d6">::Blob/722377&gt;&gt;</span></div>
<div class="l" style="left:573.4px;top:357px;transform:translateY(0.09px) scaleX(0.8590)"><span style="color:#9a9a9a">  </span><span style="color:#d6d6d6">app/helpers/posts_helper.rb:49:in `processed_variant&#x27;</span></div>
<div class="l" style="left:563.4px;top:379px;transform:translateY(0.95px) scaleX(0.8590)"><span style="color:#9282d2">[ActiveStorage::AnalyzeJob#d35d03da-2fa3-4e2b-a1c7-0c2824aef3b2]</span><span style="color:#7cc6da">   TRANSACTION (1.4ms)</span><span style="color:#d04a6e">  BEGIN</span></div>
<div class="l" style="left:573.4px;top:391px;transform:translateY(0.38px) scaleX(0.8590)"><span style="color:#9a9a9a">  </span><span style="color:#d6d6d6">app/helpers/posts_helper.rb:49:in `processed_variant&#x27;</span></div>
<div class="l" style="left:563.4px;top:414px;transform:translateY(0.24px) scaleX(0.8590)"><span style="color:#9282d2">[ActiveStorage::AnalyzeJob#d35d03da-2fa3-4e2b-a1c7-0c2824aef3b2]</span><span style="color:#7cc6da">   ActiveStorage::Blob Update (5.4</span></div>
<div class="l" style="left:563.4px;top:425px;transform:translateY(0.67px) scaleX(0.8590)"><span style="color:#7cc6da">ms)</span><span style="color:#dfa96c">  UPDATE &quot;active_storage_blobs&quot; SET &quot;metadata&quot; = $1 WHERE &quot;active_storage_blobs&quot;.&quot;id&quot; = $2</span><span style="color:#d6d6d6">  [[&quot;</span></div>
<div class="l" style="left:563.4px;top:437px;transform:translateY(0.10px) scaleX(0.8590)"><span style="color:#d6d6d6">metadata&quot;, &quot;{\&quot;identified\&quot;:true,\&quot;width\&quot;:600,\&quot;height\&quot;:600,\&quot;analyzed\&quot;:true}&quot;], [&quot;id&quot;, 722377]</span></div>
<div class="l" style="left:563.4px;top:448px;transform:translateY(0.53px) scaleX(0.8590)"><span style="color:#d6d6d6">]</span></div>
<div class="l" style="left:563.4px;top:459px;transform:translateY(0.96px) scaleX(0.8590)"><span style="color:#9282d2">[ActiveStorage::AnalyzeJob#d35d03da-2fa3-4e2b-a1c7-0c2824aef3b2]</span><span style="color:#7cc6da">   TRANSACTION (2.9ms)</span><span style="color:#d04a6e">  COMMIT</span></div>
<div class="l" style="left:563.4px;top:471px;transform:translateY(0.39px) scaleX(0.8590)"><span style="color:#9282d2">[ActiveStorage::AnalyzeJob#d35d03da-2fa3-4e2b-a1c7-0c2824aef3b2]</span><span style="color:#d6d6d6"> Performed ActiveStorage::AnalyzeJ</span></div>
<div class="l" style="left:563.4px;top:482px;transform:translateY(0.82px) scaleX(0.8590)"><span style="color:#d6d6d6">ob (Job ID: d35d03da-2fa3-4e2b-a1c7-0c2824aef3b2) from Sidekiq(default) in 165.99ms</span></div>
<div class="l" style="left:573.4px;top:505px;transform:translateY(0.68px) scaleX(0.8590)"><span style="color:#9a9a9a">  </span><span style="color:#d6d6d6">app/models/concerns/likeable.rb:7:in `map&#x27;</span></div>
<div class="l" style="left:563.4px;top:528px;transform:translateY(0.54px) scaleX(0.8590)"><span style="color:#c4405c">[ActiveStorage::AnalyzeJob#96e9d108-5cfa-46ce-8c67-22b88a4b559c]</span><span style="color:#7cc6da">   ActiveStorage::Blob Load (5.4ms</span></div>
<div class="l" style="left:563.4px;top:539px;transform:translateY(0.97px) scaleX(0.8590)"><span style="color:#7cc6da">)</span><span style="color:#a69ae0">  SELECT &quot;active_storage_blobs&quot;.* FROM &quot;active_storage_blobs&quot; WHERE &quot;active_storage_blobs&quot;.&quot;id&quot; =</span></div>
<div class="l" style="left:563.4px;top:551px;transform:translateY(0.40px) scaleX(0.8590)"><span style="color:#a69ae0"> $1 LIMIT $2</span><span style="color:#d6d6d6">  [[&quot;id&quot;, 722378], [&quot;LIMIT&quot;, 1]]</span></div>
<div class="l" style="left:563.4px;top:562px;transform:translateY(0.83px) scaleX(0.8590)"><span style="color:#c4405c">[ActiveStorage::AnalyzeJob#96e9d108-5cfa-46ce-8c67-22b88a4b559c]</span><span style="color:#d6d6d6"> Performing ActiveStorage::Analyze</span></div>
<div class="l" style="left:563.4px;top:574px;transform:translateY(0.26px) scaleX(0.8590)"><span style="color:#d6d6d6">Job (Job ID: 96e9d108-5cfa-46ce-8c67-22b88a4b559c) from Sidekiq(default) enqueued at 2025-11-04T17</span></div>
<div class="l" style="left:563.4px;top:585px;transform:translateY(0.69px) scaleX(0.8590)"><span style="color:#d6d6d6">:40:15Z with arguments: #&lt;GlobalID:0x0000000126a3e7c0 @uri=#&lt;URI::GID gid://professo/ActiveStorage</span></div>
<div class="l" style="left:563.4px;top:597px;transform:translateY(0.12px) scaleX(0.8590)"><span style="color:#d6d6d6">::Blob/722378&gt;&gt;</span></div>
<div style="position:absolute;left:1060px;top:618px;width:20px;height:20px;background:radial-gradient(circle at 100% 100%, #2a2060 0, rgba(35,35,35,0) 14px)"></div>
<div style="position:absolute;left:0;top:618px;width:20px;height:20px;background:radial-gradient(circle at 0 100%, #262048 0, rgba(35,35,35,0) 12px)"></div>
<div class="tip">Name: (null)
Profile: (null)
Command: None</div>
</body></html>
